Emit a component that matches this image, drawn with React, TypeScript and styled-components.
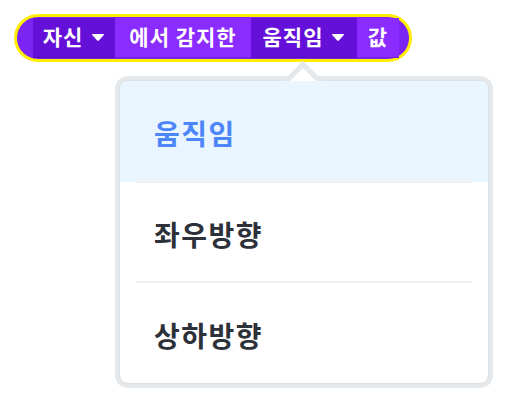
import React from "react";
import styled, { createGlobalStyle } from "styled-components";

const Global = createGlobalStyle`
  html, body { margin: 0; padding: 0; background: #ffffff; }
  body { font-family: "Noto Sans CJK KR", "Noto Sans", sans-serif; }
`;

const Page = styled.div`
  width: 510px;
  height: 400px;
  padding: 14px 0 0 14px;
  box-sizing: border-box;
  display: flex;
  flex-direction: column;
  align-items: flex-start;
  gap: 18px;
`;

const Block = styled.div`
  display: flex;
  align-items: stretch;
  height: 48px;
  box-sizing: border-box;
  border: 3px solid #ffee00;
  border-radius: 24px;
  background: #7c24f4;
  padding: 1px 10px 1px 16px;
`;

const Segment = styled.div<{ $dark?: boolean; $w: number }>`
  display: flex;
  align-items: center;
  justify-content: center;
  gap: 8px;
  width: ${(p) => p.$w}px;
  box-sizing: border-box;
  padding-bottom: 4px;
  background: ${(p) => (p.$dark ? "#6510d8" : "#8a2bff")};
  box-shadow: inset 0 -1px 0 rgba(40, 0, 110, 0.25);
  color: #ffffff;
  font-size: 21px;
  font-weight: 700;
  letter-spacing: 1px;
  line-height: 1;
  white-space: nowrap;
`;

const Caret = () => (
  <svg width="14" height="9" viewBox="0 0 14 9" style={{ marginTop: 3 }}>
    <path
      d="M1.6 1 H12.4 Q13.6 1 12.8 2 L7.8 7.6 Q7 8.5 6.2 7.6 L1.2 2 Q0.4 1 1.6 1 Z"
      fill="#ffffff"
    />
  </svg>
);

const Dropdown = styled.div`
  position: relative;
  margin-left: 105px;
  width: 370px;
  box-sizing: border-box;
  background: #ffffff;
  border: 1px solid #dce1e5;
  border-radius: 9px;
  box-shadow: 0 0 0 4px #e5e9ec;
`;

const ArrowClip = styled.div`
  position: absolute;
  left: 153px;
  top: -26px;
  width: 60px;
  height: 26px;
  overflow: hidden;
`;

const ArrowSquare = styled.div`
  position: absolute;
  left: 19px;
  top: 16px;
  width: 22px;
  height: 22px;
  background: #ffffff;
  border: 1px solid #dce1e5;
  box-sizing: border-box;
  box-shadow: 0 0 0 4px #e5e9ec;
  transform: rotate(45deg);
`;

const List = styled.div`
  border-radius: 8px;
  overflow: hidden;
  display: flex;
  flex-direction: column;
`;

const Item = styled.div<{ $active?: boolean }>`
  height: 100.7px;
  box-sizing: border-box;
  display: flex;
  align-items: center;
  padding: 4px 0 0 34px;
  background: ${(p) => (p.$active ? "#e9f5ff" : "transparent")};
  color: ${(p) => (p.$active ? "#4d86f8" : "#2d3139")};
  font-size: 28px;
  font-weight: 700;
  letter-spacing: 1.5px;
  line-height: 1;
`;

const Divider = styled.div`
  height: 2px;
  margin: -1px 16px;
  background: #eef0f2;
  position: relative;
`;

export default function App() {
  return (
    <>
      <Global />
      <Page>
        <Block>
          <Segment $dark $w={82}>
            자신
            <Caret />
          </Segment>
          <Segment $w={136}>에서 감지한</Segment>
          <Segment $dark $w={106}>
            움직임
            <Caret />
          </Segment>
          <Segment $w={42}>값</Segment>
        </Block>
        <Dropdown>
          <ArrowClip>
            <ArrowSquare />
          </ArrowClip>
          <List>
            <Item $active>움직임</Item>
            <Divider />
            <Item>좌우방향</Item>
            <Divider />
            <Item>상하방향</Item>
          </List>
        </Dropdown>
      </Page>
    </>
  );
}
